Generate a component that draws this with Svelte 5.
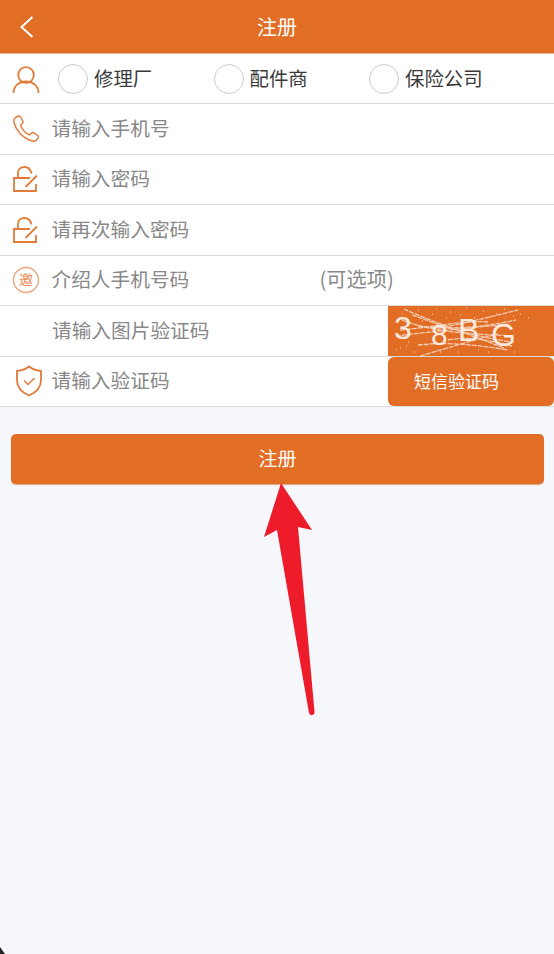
<script>
const types = ['修理厂', '配件商', '保险公司'];
</script>

<div class="page">
	<header class="nav">
		<svg class="back" width="16" height="24" viewBox="0 0 16 24"><path d="M13.500 2 L2.500 12 L13.500 22" /></svg>
		<span>注册</span>
	</header>

	<div class="row first">
		<svg class="icon" width="30" height="30" viewBox="0 0 30 30">
			<circle cx="15" cy="11" r="7.800" />
			<path d="M2.500 29 C2.500 22 8 17.500 15 17.500 C22 17.500 27.500 22 27.500 29" />
		</svg>
		{#each types as t}
			<label class="radio"><i></i><span>{t}</span></label>
		{/each}
	</div>

	<div class="row">
		<svg class="icon" width="30" height="30" viewBox="0 0 30 30">
			<path class="thin" d="M4.500 3.500 L7.500 2 C8.500 1.700 9.200 2.200 9.700 3 L12 7.500 C12.300 8.500 12 9.200 11.200 9.800 L9.500 11 C11 15 15 19.500 18.800 21 L20.500 19.200 C21.200 18.500 22 18.400 22.800 18.900 L26.800 21.500 C27.600 22.200 27.600 23 27.200 23.800 L25.600 26 C24.300 27.500 22.300 27.500 19.800 26.500 C11 23.500 4.500 15.500 3 8.500 C2.600 6.500 3.200 4.500 4.500 3.500 Z" />
		</svg>
		<span class="hint">请输入手机号</span>
	</div>

	<div class="row">
		<svg class="icon" width="30" height="30" viewBox="0 0 30 30">
			<path d="M25 20 L25 27 L3 27 L3 14 L19 14" />
			<path d="M7 14 L7 9 C7 5 10 3 13.500 3 C17 3 19.500 5 20.500 9.500" />
			<path d="M14.500 23 L26 11.500" />
		</svg>
		<span class="hint">请输入密码</span>
	</div>

	<div class="row">
		<svg class="icon" width="30" height="30" viewBox="0 0 30 30">
			<path d="M25 20 L25 27 L3 27 L3 14 L19 14" />
			<path d="M7 14 L7 9 C7 5 10 3 13.500 3 C17 3 19.500 5 20.500 9.500" />
			<path d="M14.500 23 L26 11.500" />
		</svg>
		<span class="hint">请再次输入密码</span>
	</div>

	<div class="row">
		<svg class="icon" width="30" height="30" viewBox="0 0 30 30">
			<circle class="ring" cx="15" cy="15" r="12.500" />
			<text x="15" y="20" text-anchor="middle">邀</text>
		</svg>
		<span class="hint">介绍人手机号码</span>
		<span class="hint optional">(可选项)</span>
	</div>

	<div class="row">
		<span class="hint noicon">请输入图片验证码</span>
		<div class="captcha">
			<svg width="166" height="50" viewBox="0 0 166 50">
				<g class="noise">
					<path d="M16 3 C40 14 70 24 116 42" />
					<path d="M24 9 C50 18 80 30 124 36" />
					<path d="M50 22 C75 18 105 10 130 4" />
					<path d="M8 30 C40 26 80 22 122 18" />
					<path d="M30 39 C55 36 85 38 120 44" />
					<path d="M30 20 C60 24 90 22 128 14" />
					<path d="M32 50 C60 42 85 34 110 28" />
					<path d="M14 14 C50 28 90 28 126 30" />
					<path d="M60 34 C80 30 100 34 124 40" />
					<path d="M12 24 C40 22 75 14 100 16" />
				</g>
				<path class="dots" d="M14 8h1M30 4h1M48 3h1M62 6h1M78 2h1M95 5h1M108 8h1M125 10h1M12 42h1M26 46h1M38 40h1M52 46h1M90 44h1M118 40h1M140 12h1M20 36h1M70 46h1M34 15h1M86 12h1M8 44h1M44 8h1M58 12h1M72 9h1M102 11h1M116 3h1M132 8h1M18 40h1M100 46h1M126 46h1" />
				<text class="c1" x="6" y="33">3</text>
				<text class="c1 small" x="43" y="39">8</text>
				<text class="c1" x="70" y="35">B</text>
				<text class="c1" x="103" y="40">G</text>
			</svg>
		</div>
	</div>

	<div class="row">
		<svg class="icon shield" width="30" height="32" viewBox="0 0 30 32">
			<path d="M15 1.500 C18 4 22 5.500 27 6 L27 15 C27 22 22 27.500 15 30.500 C8 27.500 3 22 3 15 L3 6 C8 5.500 12 4 15 1.500 Z" />
			<path class="thin" d="M10 15.500 L14 19.500 L20.500 13" />
		</svg>
		<span class="hint">请输入验证码</span>
		<button class="sms"><span>短信验证码</span></button>
	</div>

	<button class="submit"><span>注册</span></button>

	<!-- red arrow drawn over the screenshot -->
	<svg class="arrow" width="60" height="240" viewBox="0 0 60 240">
		<path d="M21 0 L52 47 L38 44 L54.500 229 A2.800 2.800 0 0 1 49 230 L17 47 L4 54 Z" />
	</svg>

	<i class="corner"></i>
</div>

<style>
	:global(body) {
		margin: 0;
		background: #f6f7fb;
	}
	.page {
		position: relative;
		height: 954px;
		overflow: hidden;
		font-family: "Noto Sans CJK SC", "Noto Sans", sans-serif;
		background: #f6f7fb;
	}
	.nav {
		height: 53px;
		background: #e26d25;
		color: #fff;
		font-size: 20px;
		display: flex;
		align-items: center;
		justify-content: center;
		position: relative;
		border-bottom: 1px solid #ebb58f;
	}
	.nav span {
		padding-bottom: 1px;
	}
	.back {
		position: absolute;
		left: 19px;
		top: 15px;
		fill: none;
		stroke: #fff;
		stroke-width: 2;
	}
	.row {
		height: 49.500px;
		background: #fff;
		border-bottom: 1px solid #dcdcdc;
		display: flex;
		align-items: center;
		position: relative;
	}
	.row.first {
		height: 49px;
	}
	.icon {
		flex: none;
		margin-left: 11px;
		margin-right: 11px;
		fill: none;
		stroke: #e07b3a;
		stroke-width: 1.800;
	}
	.icon .thin {
		stroke-width: 1.400;
	}
	.icon .ring {
		stroke: #eda77a;
		stroke-width: 1.400;
	}
	.icon text {
		fill: #e88a4e;
		stroke: none;
		font-size: 14px;
	}
	.shield {
		margin-left: 14px;
		margin-right: 8px;
	}
	.radio {
		display: flex;
		align-items: center;
		gap: 6px;
		width: 155.500px;
		font-size: 19.400px;
		color: #3a3a3a;
		margin-left: 6px;
		margin-right: -6px;
	}
	.radio span {
		padding-bottom: 3px;
	}
	.radio i {
		width: 28px;
		height: 28px;
		border: 1.200px solid #ccc;
		border-radius: 50%;
		box-sizing: content-box;
	}
	.hint {
		font-size: 19.700px;
		color: #888;
		margin-left: -0.500px;
		padding-bottom: 3px;
	}
	.noicon {
		margin-left: 52px;
	}
	.optional {
		position: absolute;
		left: 320px;
		font-size: 20.200px;
	}
	.captcha {
		margin-left: auto;
		width: 166px;
		height: 49.500px;
		overflow: hidden;
		background: #e26d25;
	}
	.captcha svg {
		display: block;
	}
	.noise path {
		fill: none;
		stroke: #f3cdb4;
		stroke-width: 1.300;
		stroke-dasharray: 5 1;
	}
	.dots {
		fill: none;
		stroke: #f8dfcf;
		stroke-width: 1.200;
	}
	.c1 {
		font-family: "Liberation Sans", sans-serif;
		font-size: 32px;
		fill: #fbeadf;
	}
	.c1.small {
		font-size: 30px;
	}
	.sms {
		margin-left: auto;
		width: 166px;
		height: 49.500px;
		border: none;
		border-radius: 6px;
		background: #e26d25;
		color: #fff;
		font: inherit;
		font-size: 17px;
		text-align: left;
		padding: 0 0 2px 26px;
	}
	.submit {
		display: block;
		margin: 27px 10px 0 11px;
		width: 533px;
		height: 50px;
		border: none;
		border-radius: 5px;
		background: #e26d25;
		color: #fff;
		font: inherit;
		font-size: 19px;
		padding: 0 0 3px;
		box-shadow: 0 1px 1px #d9a27e;
	}
	.arrow {
		position: absolute;
		left: 260px;
		top: 483px;
		fill: #ee1c2b;
	}
	.corner {
		position: absolute;
		left: 0;
		bottom: 0;
		width: 5px;
		height: 7px;
		background: #222;
		clip-path: polygon(0 0, 100% 100%, 0 100%);
	}
</style>
